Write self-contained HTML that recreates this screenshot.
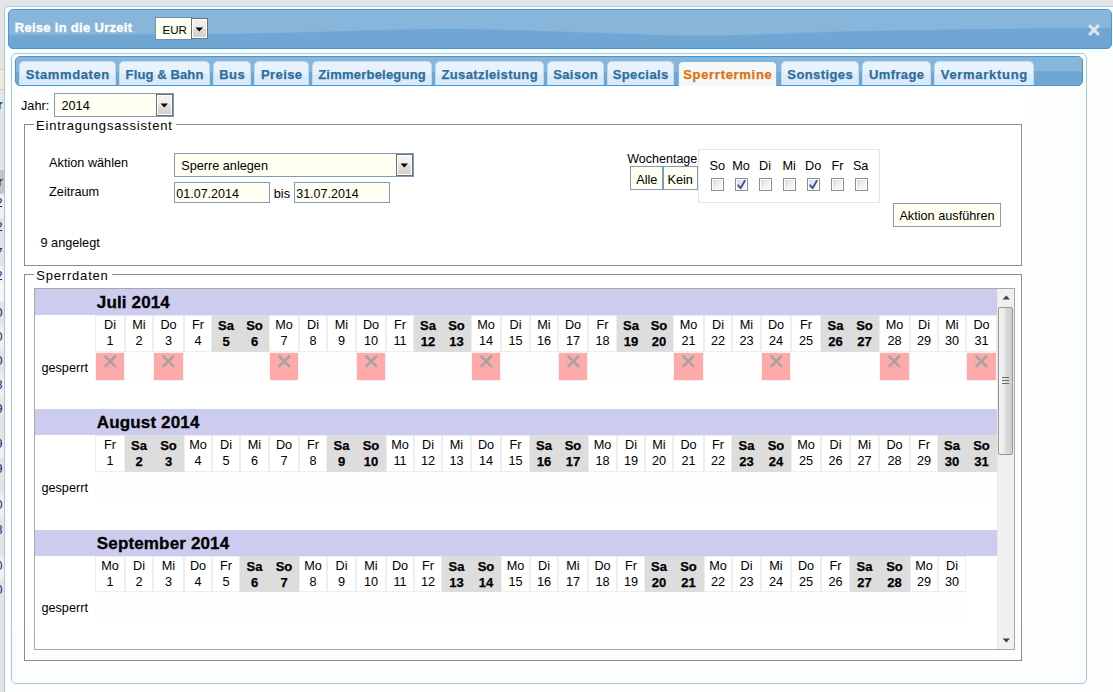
<!DOCTYPE html>
<html><head><meta charset="utf-8"><title>Sperrtermine</title>
<style>
html,body{margin:0;padding:0}
body{width:1113px;height:692px;overflow:hidden;position:relative;background:#e4e4e4;font-family:'Liberation Sans', sans-serif}
.t{position:absolute;white-space:nowrap;line-height:1;font-family:'Liberation Sans', sans-serif}
.c{position:absolute;text-align:center;line-height:16px;color:#000;font-family:'Liberation Sans', sans-serif}
</style></head><body>
<div style="position:absolute;left:0px;top:0px;width:5px;height:69px;box-sizing:border-box;background:#e4e4e4"></div><div style="position:absolute;left:0px;top:69px;width:5px;height:1px;box-sizing:border-box;background:#c8c8c8"></div><div style="position:absolute;left:0px;top:70px;width:5px;height:19px;box-sizing:border-box;background:#ece9d8"></div><div style="position:absolute;left:0px;top:89px;width:5px;height:1px;box-sizing:border-box;background:#c8c8c8"></div><div style="position:absolute;left:0px;top:90px;width:5px;height:80px;box-sizing:border-box;background:#e4e4e4"></div><div style="position:absolute;left:0px;top:170px;width:5px;height:24px;box-sizing:border-box;background:#c4c4c4"></div><div style="position:absolute;left:0px;top:194px;width:5px;height:24px;box-sizing:border-box;background:#f0f0f0"></div><div style="position:absolute;left:0px;top:218px;width:5px;height:24px;box-sizing:border-box;background:#e4e4e4"></div><div style="position:absolute;left:0px;top:242px;width:5px;height:24px;box-sizing:border-box;background:#e4e4e4"></div><div style="position:absolute;left:0px;top:266px;width:5px;height:17px;box-sizing:border-box;background:#f0f0f0"></div><div style="position:absolute;left:0px;top:283px;width:5px;height:19px;box-sizing:border-box;background:#f6f6f6"></div><div style="position:absolute;left:0px;top:302px;width:5px;height:25px;box-sizing:border-box;background:#e4e4e4"></div><div style="position:absolute;left:0px;top:327px;width:5px;height:24px;box-sizing:border-box;background:#f0f0f0"></div><div style="position:absolute;left:0px;top:351px;width:5px;height:24px;box-sizing:border-box;background:#e4e4e4"></div><div style="position:absolute;left:0px;top:375px;width:5px;height:24px;box-sizing:border-box;background:#f0f0f0"></div><div style="position:absolute;left:0px;top:399px;width:5px;height:41px;box-sizing:border-box;background:#e4e4e4"></div><div style="position:absolute;left:0px;top:440px;width:5px;height:18px;box-sizing:border-box;background:#f0f0f0"></div><div style="position:absolute;left:0px;top:458px;width:5px;height:37px;box-sizing:border-box;background:#e4e4e4"></div><div style="position:absolute;left:0px;top:495px;width:5px;height:24px;box-sizing:border-box;background:#f0f0f0"></div><div style="position:absolute;left:0px;top:519px;width:5px;height:37px;box-sizing:border-box;background:#e4e4e4"></div><div style="position:absolute;left:0px;top:556px;width:5px;height:24px;box-sizing:border-box;background:#f0f0f0"></div><div style="position:absolute;left:0px;top:580px;width:5px;height:112px;box-sizing:border-box;background:#e4e4e4"></div><div style="position:absolute;left:0;top:0;width:4px;height:692px;overflow:hidden"><div class="t" style="left:-2.20px;top:99.25px;font-size:12.7px;font-weight:bold;color:#2a2a2a;letter-spacing:0px;">r</div><div class="t" style="left:-2.20px;top:176.25px;font-size:12.7px;font-weight:bold;color:#3a2a10;letter-spacing:0px;">r</div><div class="t" style="left:-4.50px;top:197.25px;font-size:12.7px;font-weight:normal;color:#2a1a7a;letter-spacing:0px;">2</div><div class="t" style="left:-4.50px;top:221.25px;font-size:12.7px;font-weight:normal;color:#2a1a7a;letter-spacing:0px;">2</div><div class="t" style="left:-4.50px;top:247.25px;font-size:12.7px;font-weight:normal;color:#2a1a7a;letter-spacing:0px;">7</div><div class="t" style="left:-4.50px;top:270.25px;font-size:12.7px;font-weight:normal;color:#2a1a7a;letter-spacing:0px;">2</div><div class="t" style="left:-4.50px;top:307.25px;font-size:12.7px;font-weight:normal;color:#2a1a7a;letter-spacing:0px;">0</div><div class="t" style="left:-4.50px;top:331.25px;font-size:12.7px;font-weight:normal;color:#2a1a7a;letter-spacing:0px;">0</div><div class="t" style="left:-4.50px;top:355.25px;font-size:12.7px;font-weight:normal;color:#2a1a7a;letter-spacing:0px;">0</div><div class="t" style="left:-4.50px;top:379.25px;font-size:12.7px;font-weight:normal;color:#2a1a7a;letter-spacing:0px;">8</div><div class="t" style="left:-4.50px;top:403.25px;font-size:12.7px;font-weight:normal;color:#2a1a7a;letter-spacing:0px;">9</div><div class="t" style="left:-4.50px;top:438.25px;font-size:12.7px;font-weight:normal;color:#2a1a7a;letter-spacing:0px;">9</div><div class="t" style="left:-4.50px;top:463.25px;font-size:12.7px;font-weight:normal;color:#2a1a7a;letter-spacing:0px;">9</div><div class="t" style="left:-4.50px;top:499.25px;font-size:12.7px;font-weight:normal;color:#2a1a7a;letter-spacing:0px;">0</div><div class="t" style="left:-4.50px;top:524.25px;font-size:12.7px;font-weight:normal;color:#2a1a7a;letter-spacing:0px;">8</div><div class="t" style="left:-4.50px;top:560.25px;font-size:12.7px;font-weight:normal;color:#2a1a7a;letter-spacing:0px;">0</div><div class="t" style="left:-4.50px;top:584.25px;font-size:12.7px;font-weight:normal;color:#2a1a7a;letter-spacing:0px;">0</div></div><div style="position:absolute;left:4px;top:6px;width:1120px;height:720px;border:1px solid #a6c9e2;border-radius:5px;background:#fcfdfd;box-sizing:border-box"></div><div id="titlebar" style="position:absolute;left:8px;top:9px;width:1104px;height:40px;border:1px solid #4297d7;border-radius:5px;box-sizing:border-box;overflow:hidden;background:#6fa6d3"><svg width="1102" height="38" style="position:absolute;left:0;top:0"><path d="M0,0 H1102 V18.40 L1102.0,18.40 L1083.3,18.46 L1064.6,18.56 L1046.0,18.70 L1027.3,18.87 L1008.6,19.07 L989.9,19.29 L971.3,19.54 L952.6,19.80 L933.9,20.09 L915.2,20.39 L896.5,20.70 L877.9,21.03 L859.2,21.35 L840.5,21.72 L821.8,22.25 L803.2,22.91 L784.5,23.63 L765.8,24.36 L747.1,25.03 L728.4,25.58 L709.8,25.96 L691.1,26.10 L672.4,25.92 L653.7,25.46 L635.1,24.83 L616.4,24.14 L597.7,23.50 L579.0,22.95 L560.3,22.34 L541.7,21.68 L523.0,21.02 L504.3,20.41 L485.6,19.90 L466.9,19.52 L448.3,19.32 L429.6,19.34 L410.9,19.54 L392.2,19.88 L373.6,20.34 L354.9,20.87 L336.2,21.45 L317.5,22.04 L298.8,22.60 L280.2,23.10 L261.5,23.50 L242.8,23.78 L224.1,23.97 L205.5,24.14 L186.8,24.32 L168.1,24.48 L149.4,24.63 L130.7,24.78 L112.1,24.91 L93.4,25.02 L74.7,25.12 L56.0,25.19 L37.4,25.25 L18.7,25.29 L0.0,25.30 Z" fill="#7caed7"/><path d="M0,0 H1102 V17.60 L1102.0,17.60 L1083.3,17.66 L1064.6,17.76 L1046.0,17.90 L1027.3,18.07 L1008.6,18.27 L989.9,18.49 L971.3,18.74 L952.6,19.00 L933.9,19.29 L915.2,19.59 L896.5,19.90 L877.9,20.23 L859.2,20.55 L840.5,20.92 L821.8,21.45 L803.2,22.11 L784.5,22.83 L765.8,23.56 L747.1,24.23 L728.4,24.78 L709.8,25.16 L691.1,25.30 L672.4,25.12 L653.7,24.66 L635.1,24.03 L616.4,23.34 L597.7,22.70 L579.0,22.15 L560.3,21.54 L541.7,20.88 L523.0,20.22 L504.3,19.61 L485.6,19.10 L466.9,18.72 L448.3,18.52 L429.6,18.54 L410.9,18.74 L392.2,19.08 L373.6,19.54 L354.9,20.07 L336.2,20.65 L317.5,21.24 L298.8,21.80 L280.2,22.30 L261.5,22.70 L242.8,22.98 L224.1,23.17 L205.5,23.34 L186.8,23.52 L168.1,23.68 L149.4,23.83 L130.7,23.98 L112.1,24.11 L93.4,24.22 L74.7,24.32 L56.0,24.39 L37.4,24.45 L18.7,24.49 L0.0,24.50 Z" fill="#88b5da"/></svg></div><div class="t" style="left:14.70px;top:21.00px;font-size:13px;font-weight:bold;color:#ffffff;letter-spacing:0.3px;-webkit-text-stroke:0.35px #fff;">Reise in die Urzeit</div><div style="position:absolute;left:155px;top:17px;width:37px;height:23px;box-sizing:border-box;border:1px solid #6f8fb3;border-right:0;background:#fffff2"></div><div class="t" style="left:162.50px;top:24.18px;font-size:11.6px;font-weight:normal;color:#000;letter-spacing:0px;">EUR</div><div style="position:absolute;left:191px;top:18px;width:17px;height:21px;box-sizing:border-box;border:1px solid #707070;background:linear-gradient(#f2f2f2 0%,#ebebeb 50%,#dcdcdc 51%,#d0d0d0 100%);box-shadow:inset 0 0 0 1px #fff"></div><svg style="position:absolute;left:195px;top:26.5px" width="9" height="6"><path d="M0.5,0.5 H8 L4.25,4.5 Z" fill="#000"/></svg><svg style="position:absolute;left:1088px;top:24px" width="12" height="12"><path d="M2.2,2.2 L9.8,9.8 M9.8,2.2 L2.2,9.8" stroke="#dce6f0" stroke-width="3" stroke-linecap="square"/></svg><div style="position:absolute;left:11px;top:53px;width:1076px;height:631px;border:1px solid #a6c9e2;border-radius:5px;background:#fcfdfd;box-sizing:border-box"></div><div style="position:absolute;left:15px;top:56px;width:1068px;height:30px;border:1px solid #4297d7;border-radius:5px;box-sizing:border-box;overflow:hidden;background:#6fa6d3"><svg width="1066" height="28" style="position:absolute;left:0;top:0"><path d="M0,0 H1066 V14.6 C900,14.8 700,15.5 500,15.3 C300,15 150,15 0,15 Z" fill="#7caed7"/><path d="M0,0 H1066 V14 C900,14.2 700,15 500,14.8 C300,14.5 150,14.5 0,14.5 Z" fill="#88b5da"/></svg></div><div style="position:absolute;left:15px;top:86px;width:1016px;height:543px;box-sizing:border-box;background:#ffffff"></div><div style="position:absolute;left:19px;top:61px;width:97px;height:24px;box-sizing:border-box;border:1px solid #c5dbec;border-bottom:0;background:linear-gradient(#eaf3fc 0%,#e6f1fc 50%,#dcebfa 52%,#dae9f9 100%);border-radius:5px 5px 0 0;font-family:'Liberation Sans', sans-serif;font-size:13px;font-weight:bold;color:#2e6e9e;text-align:center;line-height:25.5px;letter-spacing:0.6px;text-indent:0.6px;-webkit-text-stroke:0.25px #2e6e9e">Stammdaten</div><div style="position:absolute;left:119px;top:61px;width:91px;height:24px;box-sizing:border-box;border:1px solid #c5dbec;border-bottom:0;background:linear-gradient(#eaf3fc 0%,#e6f1fc 50%,#dcebfa 52%,#dae9f9 100%);border-radius:5px 5px 0 0;font-family:'Liberation Sans', sans-serif;font-size:13px;font-weight:bold;color:#2e6e9e;text-align:center;line-height:25.5px;letter-spacing:0.12px;text-indent:0.12px;-webkit-text-stroke:0.25px #2e6e9e">Flug &amp; Bahn</div><div style="position:absolute;left:213px;top:61px;width:38px;height:24px;box-sizing:border-box;border:1px solid #c5dbec;border-bottom:0;background:linear-gradient(#eaf3fc 0%,#e6f1fc 50%,#dcebfa 52%,#dae9f9 100%);border-radius:5px 5px 0 0;font-family:'Liberation Sans', sans-serif;font-size:13px;font-weight:bold;color:#2e6e9e;text-align:center;line-height:25.5px;letter-spacing:0.4px;text-indent:0.4px;-webkit-text-stroke:0.25px #2e6e9e">Bus</div><div style="position:absolute;left:254px;top:61px;width:55px;height:24px;box-sizing:border-box;border:1px solid #c5dbec;border-bottom:0;background:linear-gradient(#eaf3fc 0%,#e6f1fc 50%,#dcebfa 52%,#dae9f9 100%);border-radius:5px 5px 0 0;font-family:'Liberation Sans', sans-serif;font-size:13px;font-weight:bold;color:#2e6e9e;text-align:center;line-height:25.5px;letter-spacing:0.4px;text-indent:0.4px;-webkit-text-stroke:0.25px #2e6e9e">Preise</div><div style="position:absolute;left:312px;top:61px;width:120px;height:24px;box-sizing:border-box;border:1px solid #c5dbec;border-bottom:0;background:linear-gradient(#eaf3fc 0%,#e6f1fc 50%,#dcebfa 52%,#dae9f9 100%);border-radius:5px 5px 0 0;font-family:'Liberation Sans', sans-serif;font-size:13px;font-weight:bold;color:#2e6e9e;text-align:center;line-height:25.5px;letter-spacing:0.22px;text-indent:0.22px;-webkit-text-stroke:0.25px #2e6e9e">Zimmerbelegung</div><div style="position:absolute;left:435px;top:61px;width:109px;height:24px;box-sizing:border-box;border:1px solid #c5dbec;border-bottom:0;background:linear-gradient(#eaf3fc 0%,#e6f1fc 50%,#dcebfa 52%,#dae9f9 100%);border-radius:5px 5px 0 0;font-family:'Liberation Sans', sans-serif;font-size:13px;font-weight:bold;color:#2e6e9e;text-align:center;line-height:25.5px;letter-spacing:0.4px;text-indent:0.4px;-webkit-text-stroke:0.25px #2e6e9e">Zusatzleistung</div><div style="position:absolute;left:547px;top:61px;width:57px;height:24px;box-sizing:border-box;border:1px solid #c5dbec;border-bottom:0;background:linear-gradient(#eaf3fc 0%,#e6f1fc 50%,#dcebfa 52%,#dae9f9 100%);border-radius:5px 5px 0 0;font-family:'Liberation Sans', sans-serif;font-size:13px;font-weight:bold;color:#2e6e9e;text-align:center;line-height:25.5px;letter-spacing:0.4px;text-indent:0.4px;-webkit-text-stroke:0.25px #2e6e9e">Saison</div><div style="position:absolute;left:607px;top:61px;width:67px;height:24px;box-sizing:border-box;border:1px solid #c5dbec;border-bottom:0;background:linear-gradient(#eaf3fc 0%,#e6f1fc 50%,#dcebfa 52%,#dae9f9 100%);border-radius:5px 5px 0 0;font-family:'Liberation Sans', sans-serif;font-size:13px;font-weight:bold;color:#2e6e9e;text-align:center;line-height:25.5px;letter-spacing:0.4px;text-indent:0.4px;-webkit-text-stroke:0.25px #2e6e9e">Specials</div><div style="position:absolute;left:678px;top:61px;width:99px;height:25px;box-sizing:border-box;border:1px solid #79b7e7;border-bottom:0;background:#f5f8f9;border-radius:5px 5px 0 0;font-family:'Liberation Sans', sans-serif;font-size:13px;font-weight:bold;color:#e17009;text-align:center;line-height:25.5px;letter-spacing:0.7px;text-indent:0.7px;-webkit-text-stroke:0.25px #e17009">Sperrtermine</div><div style="position:absolute;left:781px;top:61px;width:78px;height:24px;box-sizing:border-box;border:1px solid #c5dbec;border-bottom:0;background:linear-gradient(#eaf3fc 0%,#e6f1fc 50%,#dcebfa 52%,#dae9f9 100%);border-radius:5px 5px 0 0;font-family:'Liberation Sans', sans-serif;font-size:13px;font-weight:bold;color:#2e6e9e;text-align:center;line-height:25.5px;letter-spacing:0.4px;text-indent:0.4px;-webkit-text-stroke:0.25px #2e6e9e">Sonstiges</div><div style="position:absolute;left:862px;top:61px;width:69px;height:24px;box-sizing:border-box;border:1px solid #c5dbec;border-bottom:0;background:linear-gradient(#eaf3fc 0%,#e6f1fc 50%,#dcebfa 52%,#dae9f9 100%);border-radius:5px 5px 0 0;font-family:'Liberation Sans', sans-serif;font-size:13px;font-weight:bold;color:#2e6e9e;text-align:center;line-height:25.5px;letter-spacing:0.4px;text-indent:0.4px;-webkit-text-stroke:0.25px #2e6e9e">Umfrage</div><div style="position:absolute;left:934px;top:61px;width:100px;height:24px;box-sizing:border-box;border:1px solid #c5dbec;border-bottom:0;background:linear-gradient(#eaf3fc 0%,#e6f1fc 50%,#dcebfa 52%,#dae9f9 100%);border-radius:5px 5px 0 0;font-family:'Liberation Sans', sans-serif;font-size:13px;font-weight:bold;color:#2e6e9e;text-align:center;line-height:25.5px;letter-spacing:0.7px;text-indent:0.7px;-webkit-text-stroke:0.25px #2e6e9e">Vermarktung</div><div class="t" style="left:21.00px;top:100.25px;font-size:12.7px;font-weight:normal;color:#000;letter-spacing:0px;">Jahr:</div><div style="position:absolute;left:54px;top:93px;width:120px;height:24px;box-sizing:border-box;border:1px solid #7f9db9;background:#fffff2"></div><div class="t" style="left:61.50px;top:99.85px;font-size:12.7px;font-weight:normal;color:#000;letter-spacing:0px;">2014</div><div style="position:absolute;left:156px;top:94px;width:17px;height:22px;box-sizing:border-box;border:1px solid #707070;background:linear-gradient(#f4f4f4 0%,#ececec 48%,#dedede 52%,#d2d2d2 100%);box-shadow:inset 0 0 0 1px #fff"></div><svg style="position:absolute;left:160.0px;top:102.5px" width="9" height="6"><path d="M0.5,0.5 H8 L4.25,4.5 Z" fill="#000"/></svg><div style="position:absolute;left:24px;top:124px;width:998px;height:142px;box-sizing:border-box;border:1px solid #8c8c8c"></div><div style="position:absolute;left:34px;top:124px;width:142px;height:1px;box-sizing:border-box;background:#fcfdfd"></div><div class="t" style="left:36.00px;top:118.60px;font-size:13px;font-weight:normal;color:#000;letter-spacing:0.8px;">Eintragungsassistent</div><div class="t" style="left:49.10px;top:157.25px;font-size:12.7px;font-weight:normal;color:#000;letter-spacing:0px;">Aktion w&auml;hlen</div><div class="t" style="left:49.10px;top:186.25px;font-size:12.7px;font-weight:normal;color:#000;letter-spacing:0px;">Zeitraum</div><div class="t" style="left:40.50px;top:236.75px;font-size:12.7px;font-weight:normal;color:#000;letter-spacing:0px;">9 angelegt</div><div style="position:absolute;left:174px;top:153px;width:240px;height:24px;box-sizing:border-box;border:1px solid #7f9db9;background:#fffff2"></div><div class="t" style="left:181.20px;top:159.95px;font-size:12.7px;font-weight:normal;color:#000;letter-spacing:0px;">Sperre anlegen</div><div style="position:absolute;left:396px;top:154px;width:17px;height:22px;box-sizing:border-box;border:1px solid #707070;background:linear-gradient(#f4f4f4 0%,#ececec 48%,#dedede 52%,#d2d2d2 100%);box-shadow:inset 0 0 0 1px #fff"></div><svg style="position:absolute;left:400.0px;top:162.5px" width="9" height="6"><path d="M0.5,0.5 H8 L4.25,4.5 Z" fill="#000"/></svg><div style="position:absolute;left:174px;top:182px;width:96px;height:21px;box-sizing:border-box;border:1px solid #7f9db9;background:#fffff2"></div><div class="t" style="left:176.30px;top:188.42px;font-size:12.5px;font-weight:normal;color:#000;letter-spacing:0px;">01.07.2014</div><div class="t" style="left:273.80px;top:188.25px;font-size:12.7px;font-weight:normal;color:#000;letter-spacing:0px;">bis</div><div style="position:absolute;left:294px;top:182px;width:96px;height:21px;box-sizing:border-box;border:1px solid #7f9db9;background:#fffff2"></div><div class="t" style="left:296.20px;top:188.42px;font-size:12.5px;font-weight:normal;color:#000;letter-spacing:0px;">31.07.2014</div><div class="t" style="left:627.30px;top:152.92px;font-size:12.5px;font-weight:normal;color:#000;letter-spacing:0px;">Wochentage</div><div style="position:absolute;left:630px;top:166px;width:33px;height:24px;box-sizing:border-box;border:1px solid #7f9db9;background:#fffff2"></div><div style="position:absolute;left:663px;top:166px;width:35px;height:24px;box-sizing:border-box;border:1px solid #7f9db9;background:#fffff2"></div><div class="t" style="left:636.20px;top:173.75px;font-size:12.7px;font-weight:normal;color:#000;letter-spacing:0px;">Alle</div><div class="t" style="left:667.50px;top:173.75px;font-size:12.7px;font-weight:normal;color:#000;letter-spacing:0px;">Kein</div><div style="position:absolute;left:698px;top:149px;width:182px;height:54px;box-sizing:border-box;border:1px solid #e6e6e6;background:#ffffff"></div><div class="t" style="left:709.50px;top:159.95px;font-size:12.7px;font-weight:normal;color:#000;letter-spacing:0px;">So</div><div style="position:absolute;left:711px;top:178px;width:13px;height:13px;box-sizing:border-box;border:1px solid #8e8f8f;background:#fff"></div><div style="position:absolute;left:713px;top:180px;width:9px;height:9px;box-sizing:border-box;background:linear-gradient(135deg,#d6d9e0 0%,#eceef2 50%,#fbfbfb 100%)"></div><div class="t" style="left:732.20px;top:159.95px;font-size:12.7px;font-weight:normal;color:#000;letter-spacing:0px;">Mo</div><div style="position:absolute;left:735px;top:178px;width:13px;height:13px;box-sizing:border-box;border:1px solid #8e8f8f;background:#fff"></div><div style="position:absolute;left:737px;top:180px;width:9px;height:9px;box-sizing:border-box;background:linear-gradient(135deg,#d6d9e0 0%,#eceef2 50%,#fbfbfb 100%)"></div><svg style="position:absolute;left:735px;top:178px" width="13" height="13"><path d="M3.2,7.3 L5.6,10.2 L9.8,2.8" stroke="#3e55a0" stroke-width="1.9" fill="none" stroke-linecap="round" stroke-linejoin="round"/></svg><div class="t" style="left:759.00px;top:159.95px;font-size:12.7px;font-weight:normal;color:#000;letter-spacing:0px;">Di</div><div style="position:absolute;left:759px;top:178px;width:13px;height:13px;box-sizing:border-box;border:1px solid #8e8f8f;background:#fff"></div><div style="position:absolute;left:761px;top:180px;width:9px;height:9px;box-sizing:border-box;background:linear-gradient(135deg,#d6d9e0 0%,#eceef2 50%,#fbfbfb 100%)"></div><div class="t" style="left:782.40px;top:159.95px;font-size:12.7px;font-weight:normal;color:#000;letter-spacing:0px;">Mi</div><div style="position:absolute;left:783px;top:178px;width:13px;height:13px;box-sizing:border-box;border:1px solid #8e8f8f;background:#fff"></div><div style="position:absolute;left:785px;top:180px;width:9px;height:9px;box-sizing:border-box;background:linear-gradient(135deg,#d6d9e0 0%,#eceef2 50%,#fbfbfb 100%)"></div><div class="t" style="left:805.10px;top:159.95px;font-size:12.7px;font-weight:normal;color:#000;letter-spacing:0px;">Do</div><div style="position:absolute;left:807px;top:178px;width:13px;height:13px;box-sizing:border-box;border:1px solid #8e8f8f;background:#fff"></div><div style="position:absolute;left:809px;top:180px;width:9px;height:9px;box-sizing:border-box;background:linear-gradient(135deg,#d6d9e0 0%,#eceef2 50%,#fbfbfb 100%)"></div><svg style="position:absolute;left:807px;top:178px" width="13" height="13"><path d="M3.2,7.3 L5.6,10.2 L9.8,2.8" stroke="#3e55a0" stroke-width="1.9" fill="none" stroke-linecap="round" stroke-linejoin="round"/></svg><div class="t" style="left:831.60px;top:159.95px;font-size:12.7px;font-weight:normal;color:#000;letter-spacing:0px;">Fr</div><div style="position:absolute;left:831px;top:178px;width:13px;height:13px;box-sizing:border-box;border:1px solid #8e8f8f;background:#fff"></div><div style="position:absolute;left:833px;top:180px;width:9px;height:9px;box-sizing:border-box;background:linear-gradient(135deg,#d6d9e0 0%,#eceef2 50%,#fbfbfb 100%)"></div><div class="t" style="left:852.90px;top:159.95px;font-size:12.7px;font-weight:normal;color:#000;letter-spacing:0px;">Sa</div><div style="position:absolute;left:855px;top:178px;width:13px;height:13px;box-sizing:border-box;border:1px solid #8e8f8f;background:#fff"></div><div style="position:absolute;left:857px;top:180px;width:9px;height:9px;box-sizing:border-box;background:linear-gradient(135deg,#d6d9e0 0%,#eceef2 50%,#fbfbfb 100%)"></div><div style="position:absolute;left:893px;top:203px;width:108px;height:24px;box-sizing:border-box;border:1px solid #7f9db9;background:#fffff2"></div><div class="t" style="left:899.40px;top:210.45px;font-size:12.7px;font-weight:normal;color:#000;letter-spacing:0px;">Aktion ausf&uuml;hren</div><div style="position:absolute;left:24px;top:274px;width:998px;height:387px;box-sizing:border-box;border:1px solid #8c8c8c"></div><div style="position:absolute;left:34px;top:274px;width:78px;height:1px;box-sizing:border-box;background:#fcfdfd"></div><div class="t" style="left:36.30px;top:268.60px;font-size:13px;font-weight:normal;color:#000;letter-spacing:0.8px;">Sperrdaten</div><div style="position:absolute;left:34px;top:288px;width:981px;height:362px;box-sizing:border-box;border:1px solid #a8a8a8;background:#ffffff"></div><div style="position:absolute;left:35px;top:289px;width:962px;height:26px;box-sizing:border-box;background:#ccccee"></div><div class="t" style="left:96.80px;top:294.21px;font-size:17px;font-weight:bold;color:#000;letter-spacing:0.15px;-webkit-text-stroke:0.3px #000;">Juli 2014</div><div style="position:absolute;left:95px;top:315px;width:30px;height:37px;box-sizing:border-box;border:1px solid #eeeeee;background:#ffffff"></div><div class="c" style="left:95px;top:317.2px;width:30px;font-weight:normal;font-size:12.7px;">Di<br>1</div><div style="position:absolute;left:95px;top:352px;width:30px;height:29px;box-sizing:border-box;border:1px solid #f4f4f4;background:#ffaaaa"></div><svg style="position:absolute;left:103.8px;top:354.5px" width="13" height="13"><path d="M1.5,1.5 L11.2,11.2 M11.2,1.5 L1.5,11.2" stroke="#a3a3a3" stroke-width="2.5" stroke-linecap="round"/></svg><div style="position:absolute;left:125px;top:315px;width:28px;height:37px;box-sizing:border-box;border:1px solid #eeeeee;background:#ffffff"></div><div class="c" style="left:125px;top:317.2px;width:28px;font-weight:normal;font-size:12.7px;">Mi<br>2</div><div style="position:absolute;left:125px;top:352px;width:28px;height:29px;box-sizing:border-box;background:#fefefe"></div><div style="position:absolute;left:153px;top:315px;width:31px;height:37px;box-sizing:border-box;border:1px solid #eeeeee;background:#ffffff"></div><div class="c" style="left:153px;top:317.2px;width:31px;font-weight:normal;font-size:12.7px;">Do<br>3</div><div style="position:absolute;left:153px;top:352px;width:31px;height:29px;box-sizing:border-box;border:1px solid #f4f4f4;background:#ffaaaa"></div><svg style="position:absolute;left:162.3px;top:354.5px" width="13" height="13"><path d="M1.5,1.5 L11.2,11.2 M11.2,1.5 L1.5,11.2" stroke="#a3a3a3" stroke-width="2.5" stroke-linecap="round"/></svg><div style="position:absolute;left:184px;top:315px;width:28px;height:37px;box-sizing:border-box;border:1px solid #eeeeee;background:#ffffff"></div><div class="c" style="left:184px;top:317.2px;width:28px;font-weight:normal;font-size:12.7px;">Fr<br>4</div><div style="position:absolute;left:184px;top:352px;width:28px;height:29px;box-sizing:border-box;background:#fefefe"></div><div style="position:absolute;left:212px;top:315px;width:28px;height:37px;box-sizing:border-box;background:#dddddd"></div><div class="c" style="left:212px;top:318.0px;width:28px;font-weight:bold;font-size:13px;-webkit-text-stroke:0.25px #000;">Sa<br>5</div><div style="position:absolute;left:212px;top:352px;width:28px;height:29px;box-sizing:border-box;background:#fefefe"></div><div style="position:absolute;left:240px;top:315px;width:29px;height:37px;box-sizing:border-box;background:#dddddd"></div><div class="c" style="left:240px;top:318.0px;width:29px;font-weight:bold;font-size:13px;-webkit-text-stroke:0.25px #000;">So<br>6</div><div style="position:absolute;left:240px;top:352px;width:29px;height:29px;box-sizing:border-box;background:#fefefe"></div><div style="position:absolute;left:269px;top:315px;width:30px;height:37px;box-sizing:border-box;border:1px solid #eeeeee;background:#ffffff"></div><div class="c" style="left:269px;top:317.2px;width:30px;font-weight:normal;font-size:12.7px;">Mo<br>7</div><div style="position:absolute;left:269px;top:352px;width:30px;height:29px;box-sizing:border-box;border:1px solid #f4f4f4;background:#ffaaaa"></div><svg style="position:absolute;left:277.8px;top:354.5px" width="13" height="13"><path d="M1.5,1.5 L11.2,11.2 M11.2,1.5 L1.5,11.2" stroke="#a3a3a3" stroke-width="2.5" stroke-linecap="round"/></svg><div style="position:absolute;left:299px;top:315px;width:28px;height:37px;box-sizing:border-box;border:1px solid #eeeeee;background:#ffffff"></div><div class="c" style="left:299px;top:317.2px;width:28px;font-weight:normal;font-size:12.7px;">Di<br>8</div><div style="position:absolute;left:299px;top:352px;width:28px;height:29px;box-sizing:border-box;background:#fefefe"></div><div style="position:absolute;left:327px;top:315px;width:29px;height:37px;box-sizing:border-box;border:1px solid #eeeeee;background:#ffffff"></div><div class="c" style="left:327px;top:317.2px;width:29px;font-weight:normal;font-size:12.7px;">Mi<br>9</div><div style="position:absolute;left:327px;top:352px;width:29px;height:29px;box-sizing:border-box;background:#fefefe"></div><div style="position:absolute;left:356px;top:315px;width:30px;height:37px;box-sizing:border-box;border:1px solid #eeeeee;background:#ffffff"></div><div class="c" style="left:356px;top:317.2px;width:30px;font-weight:normal;font-size:12.7px;">Do<br>10</div><div style="position:absolute;left:356px;top:352px;width:30px;height:29px;box-sizing:border-box;border:1px solid #f4f4f4;background:#ffaaaa"></div><svg style="position:absolute;left:364.8px;top:354.5px" width="13" height="13"><path d="M1.5,1.5 L11.2,11.2 M11.2,1.5 L1.5,11.2" stroke="#a3a3a3" stroke-width="2.5" stroke-linecap="round"/></svg><div style="position:absolute;left:386px;top:315px;width:28px;height:37px;box-sizing:border-box;border:1px solid #eeeeee;background:#ffffff"></div><div class="c" style="left:386px;top:317.2px;width:28px;font-weight:normal;font-size:12.7px;">Fr<br>11</div><div style="position:absolute;left:386px;top:352px;width:28px;height:29px;box-sizing:border-box;background:#fefefe"></div><div style="position:absolute;left:414px;top:315px;width:28px;height:37px;box-sizing:border-box;background:#dddddd"></div><div class="c" style="left:414px;top:318.0px;width:28px;font-weight:bold;font-size:13px;-webkit-text-stroke:0.25px #000;">Sa<br>12</div><div style="position:absolute;left:414px;top:352px;width:28px;height:29px;box-sizing:border-box;background:#fefefe"></div><div style="position:absolute;left:442px;top:315px;width:29px;height:37px;box-sizing:border-box;background:#dddddd"></div><div class="c" style="left:442px;top:318.0px;width:29px;font-weight:bold;font-size:13px;-webkit-text-stroke:0.25px #000;">So<br>13</div><div style="position:absolute;left:442px;top:352px;width:29px;height:29px;box-sizing:border-box;background:#fefefe"></div><div style="position:absolute;left:471px;top:315px;width:30px;height:37px;box-sizing:border-box;border:1px solid #eeeeee;background:#ffffff"></div><div class="c" style="left:471px;top:317.2px;width:30px;font-weight:normal;font-size:12.7px;">Mo<br>14</div><div style="position:absolute;left:471px;top:352px;width:30px;height:29px;box-sizing:border-box;border:1px solid #f4f4f4;background:#ffaaaa"></div><svg style="position:absolute;left:479.8px;top:354.5px" width="13" height="13"><path d="M1.5,1.5 L11.2,11.2 M11.2,1.5 L1.5,11.2" stroke="#a3a3a3" stroke-width="2.5" stroke-linecap="round"/></svg><div style="position:absolute;left:501px;top:315px;width:29px;height:37px;box-sizing:border-box;border:1px solid #eeeeee;background:#ffffff"></div><div class="c" style="left:501px;top:317.2px;width:29px;font-weight:normal;font-size:12.7px;">Di<br>15</div><div style="position:absolute;left:501px;top:352px;width:29px;height:29px;box-sizing:border-box;background:#fefefe"></div><div style="position:absolute;left:530px;top:315px;width:28px;height:37px;box-sizing:border-box;border:1px solid #eeeeee;background:#ffffff"></div><div class="c" style="left:530px;top:317.2px;width:28px;font-weight:normal;font-size:12.7px;">Mi<br>16</div><div style="position:absolute;left:530px;top:352px;width:28px;height:29px;box-sizing:border-box;background:#fefefe"></div><div style="position:absolute;left:558px;top:315px;width:30px;height:37px;box-sizing:border-box;border:1px solid #eeeeee;background:#ffffff"></div><div class="c" style="left:558px;top:317.2px;width:30px;font-weight:normal;font-size:12.7px;">Do<br>17</div><div style="position:absolute;left:558px;top:352px;width:30px;height:29px;box-sizing:border-box;border:1px solid #f4f4f4;background:#ffaaaa"></div><svg style="position:absolute;left:566.8px;top:354.5px" width="13" height="13"><path d="M1.5,1.5 L11.2,11.2 M11.2,1.5 L1.5,11.2" stroke="#a3a3a3" stroke-width="2.5" stroke-linecap="round"/></svg><div style="position:absolute;left:588px;top:315px;width:29px;height:37px;box-sizing:border-box;border:1px solid #eeeeee;background:#ffffff"></div><div class="c" style="left:588px;top:317.2px;width:29px;font-weight:normal;font-size:12.7px;">Fr<br>18</div><div style="position:absolute;left:588px;top:352px;width:29px;height:29px;box-sizing:border-box;background:#fefefe"></div><div style="position:absolute;left:617px;top:315px;width:28px;height:37px;box-sizing:border-box;background:#dddddd"></div><div class="c" style="left:617px;top:318.0px;width:28px;font-weight:bold;font-size:13px;-webkit-text-stroke:0.25px #000;">Sa<br>19</div><div style="position:absolute;left:617px;top:352px;width:28px;height:29px;box-sizing:border-box;background:#fefefe"></div><div style="position:absolute;left:645px;top:315px;width:28px;height:37px;box-sizing:border-box;background:#dddddd"></div><div class="c" style="left:645px;top:318.0px;width:28px;font-weight:bold;font-size:13px;-webkit-text-stroke:0.25px #000;">So<br>20</div><div style="position:absolute;left:645px;top:352px;width:28px;height:29px;box-sizing:border-box;background:#fefefe"></div><div style="position:absolute;left:673px;top:315px;width:31px;height:37px;box-sizing:border-box;border:1px solid #eeeeee;background:#ffffff"></div><div class="c" style="left:673px;top:317.2px;width:31px;font-weight:normal;font-size:12.7px;">Mo<br>21</div><div style="position:absolute;left:673px;top:352px;width:31px;height:29px;box-sizing:border-box;border:1px solid #f4f4f4;background:#ffaaaa"></div><svg style="position:absolute;left:682.3px;top:354.5px" width="13" height="13"><path d="M1.5,1.5 L11.2,11.2 M11.2,1.5 L1.5,11.2" stroke="#a3a3a3" stroke-width="2.5" stroke-linecap="round"/></svg><div style="position:absolute;left:704px;top:315px;width:28px;height:37px;box-sizing:border-box;border:1px solid #eeeeee;background:#ffffff"></div><div class="c" style="left:704px;top:317.2px;width:28px;font-weight:normal;font-size:12.7px;">Di<br>22</div><div style="position:absolute;left:704px;top:352px;width:28px;height:29px;box-sizing:border-box;background:#fefefe"></div><div style="position:absolute;left:732px;top:315px;width:29px;height:37px;box-sizing:border-box;border:1px solid #eeeeee;background:#ffffff"></div><div class="c" style="left:732px;top:317.2px;width:29px;font-weight:normal;font-size:12.7px;">Mi<br>23</div><div style="position:absolute;left:732px;top:352px;width:29px;height:29px;box-sizing:border-box;background:#fefefe"></div><div style="position:absolute;left:761px;top:315px;width:30px;height:37px;box-sizing:border-box;border:1px solid #eeeeee;background:#ffffff"></div><div class="c" style="left:761px;top:317.2px;width:30px;font-weight:normal;font-size:12.7px;">Do<br>24</div><div style="position:absolute;left:761px;top:352px;width:30px;height:29px;box-sizing:border-box;border:1px solid #f4f4f4;background:#ffaaaa"></div><svg style="position:absolute;left:769.8px;top:354.5px" width="13" height="13"><path d="M1.5,1.5 L11.2,11.2 M11.2,1.5 L1.5,11.2" stroke="#a3a3a3" stroke-width="2.5" stroke-linecap="round"/></svg><div style="position:absolute;left:791px;top:315px;width:30px;height:37px;box-sizing:border-box;border:1px solid #eeeeee;background:#ffffff"></div><div class="c" style="left:791px;top:317.2px;width:30px;font-weight:normal;font-size:12.7px;">Fr<br>25</div><div style="position:absolute;left:791px;top:352px;width:30px;height:29px;box-sizing:border-box;background:#fefefe"></div><div style="position:absolute;left:821px;top:315px;width:29px;height:37px;box-sizing:border-box;background:#dddddd"></div><div class="c" style="left:821px;top:318.0px;width:29px;font-weight:bold;font-size:13px;-webkit-text-stroke:0.25px #000;">Sa<br>26</div><div style="position:absolute;left:821px;top:352px;width:29px;height:29px;box-sizing:border-box;background:#fefefe"></div><div style="position:absolute;left:850px;top:315px;width:29px;height:37px;box-sizing:border-box;background:#dddddd"></div><div class="c" style="left:850px;top:318.0px;width:29px;font-weight:bold;font-size:13px;-webkit-text-stroke:0.25px #000;">So<br>27</div><div style="position:absolute;left:850px;top:352px;width:29px;height:29px;box-sizing:border-box;background:#fefefe"></div><div style="position:absolute;left:879px;top:315px;width:31px;height:37px;box-sizing:border-box;border:1px solid #eeeeee;background:#ffffff"></div><div class="c" style="left:879px;top:317.2px;width:31px;font-weight:normal;font-size:12.7px;">Mo<br>28</div><div style="position:absolute;left:879px;top:352px;width:31px;height:29px;box-sizing:border-box;border:1px solid #f4f4f4;background:#ffaaaa"></div><svg style="position:absolute;left:888.3px;top:354.5px" width="13" height="13"><path d="M1.5,1.5 L11.2,11.2 M11.2,1.5 L1.5,11.2" stroke="#a3a3a3" stroke-width="2.5" stroke-linecap="round"/></svg><div style="position:absolute;left:910px;top:315px;width:28px;height:37px;box-sizing:border-box;border:1px solid #eeeeee;background:#ffffff"></div><div class="c" style="left:910px;top:317.2px;width:28px;font-weight:normal;font-size:12.7px;">Di<br>29</div><div style="position:absolute;left:910px;top:352px;width:28px;height:29px;box-sizing:border-box;background:#fefefe"></div><div style="position:absolute;left:938px;top:315px;width:28px;height:37px;box-sizing:border-box;border:1px solid #eeeeee;background:#ffffff"></div><div class="c" style="left:938px;top:317.2px;width:28px;font-weight:normal;font-size:12.7px;">Mi<br>30</div><div style="position:absolute;left:938px;top:352px;width:28px;height:29px;box-sizing:border-box;background:#fefefe"></div><div style="position:absolute;left:966px;top:315px;width:31px;height:37px;box-sizing:border-box;border:1px solid #eeeeee;background:#ffffff"></div><div class="c" style="left:966px;top:317.2px;width:31px;font-weight:normal;font-size:12.7px;">Do<br>31</div><div style="position:absolute;left:966px;top:352px;width:31px;height:29px;box-sizing:border-box;border:1px solid #f4f4f4;background:#ffaaaa"></div><svg style="position:absolute;left:975.3px;top:354.5px" width="13" height="13"><path d="M1.5,1.5 L11.2,11.2 M11.2,1.5 L1.5,11.2" stroke="#a3a3a3" stroke-width="2.5" stroke-linecap="round"/></svg><div class="t" style="left:41.40px;top:361.65px;font-size:12.7px;font-weight:normal;color:#000;letter-spacing:0px;">gesperrt</div><div style="position:absolute;left:35px;top:409px;width:962px;height:26px;box-sizing:border-box;background:#ccccee"></div><div class="t" style="left:96.80px;top:414.21px;font-size:17px;font-weight:bold;color:#000;letter-spacing:0.15px;-webkit-text-stroke:0.3px #000;">August 2014</div><div style="position:absolute;left:95px;top:435px;width:30px;height:37px;box-sizing:border-box;border:1px solid #eeeeee;background:#ffffff"></div><div class="c" style="left:95px;top:437.2px;width:30px;font-weight:normal;font-size:12.7px;">Fr<br>1</div><div style="position:absolute;left:95px;top:472px;width:30px;height:29px;box-sizing:border-box;background:#fefefe"></div><div style="position:absolute;left:125px;top:435px;width:28px;height:37px;box-sizing:border-box;background:#dddddd"></div><div class="c" style="left:125px;top:438.0px;width:28px;font-weight:bold;font-size:13px;-webkit-text-stroke:0.25px #000;">Sa<br>2</div><div style="position:absolute;left:125px;top:472px;width:28px;height:29px;box-sizing:border-box;background:#fefefe"></div><div style="position:absolute;left:153px;top:435px;width:31px;height:37px;box-sizing:border-box;background:#dddddd"></div><div class="c" style="left:153px;top:438.0px;width:31px;font-weight:bold;font-size:13px;-webkit-text-stroke:0.25px #000;">So<br>3</div><div style="position:absolute;left:153px;top:472px;width:31px;height:29px;box-sizing:border-box;background:#fefefe"></div><div style="position:absolute;left:184px;top:435px;width:28px;height:37px;box-sizing:border-box;border:1px solid #eeeeee;background:#ffffff"></div><div class="c" style="left:184px;top:437.2px;width:28px;font-weight:normal;font-size:12.7px;">Mo<br>4</div><div style="position:absolute;left:184px;top:472px;width:28px;height:29px;box-sizing:border-box;background:#fefefe"></div><div style="position:absolute;left:212px;top:435px;width:28px;height:37px;box-sizing:border-box;border:1px solid #eeeeee;background:#ffffff"></div><div class="c" style="left:212px;top:437.2px;width:28px;font-weight:normal;font-size:12.7px;">Di<br>5</div><div style="position:absolute;left:212px;top:472px;width:28px;height:29px;box-sizing:border-box;background:#fefefe"></div><div style="position:absolute;left:240px;top:435px;width:29px;height:37px;box-sizing:border-box;border:1px solid #eeeeee;background:#ffffff"></div><div class="c" style="left:240px;top:437.2px;width:29px;font-weight:normal;font-size:12.7px;">Mi<br>6</div><div style="position:absolute;left:240px;top:472px;width:29px;height:29px;box-sizing:border-box;background:#fefefe"></div><div style="position:absolute;left:269px;top:435px;width:30px;height:37px;box-sizing:border-box;border:1px solid #eeeeee;background:#ffffff"></div><div class="c" style="left:269px;top:437.2px;width:30px;font-weight:normal;font-size:12.7px;">Do<br>7</div><div style="position:absolute;left:269px;top:472px;width:30px;height:29px;box-sizing:border-box;background:#fefefe"></div><div style="position:absolute;left:299px;top:435px;width:28px;height:37px;box-sizing:border-box;border:1px solid #eeeeee;background:#ffffff"></div><div class="c" style="left:299px;top:437.2px;width:28px;font-weight:normal;font-size:12.7px;">Fr<br>8</div><div style="position:absolute;left:299px;top:472px;width:28px;height:29px;box-sizing:border-box;background:#fefefe"></div><div style="position:absolute;left:327px;top:435px;width:29px;height:37px;box-sizing:border-box;background:#dddddd"></div><div class="c" style="left:327px;top:438.0px;width:29px;font-weight:bold;font-size:13px;-webkit-text-stroke:0.25px #000;">Sa<br>9</div><div style="position:absolute;left:327px;top:472px;width:29px;height:29px;box-sizing:border-box;background:#fefefe"></div><div style="position:absolute;left:356px;top:435px;width:30px;height:37px;box-sizing:border-box;background:#dddddd"></div><div class="c" style="left:356px;top:438.0px;width:30px;font-weight:bold;font-size:13px;-webkit-text-stroke:0.25px #000;">So<br>10</div><div style="position:absolute;left:356px;top:472px;width:30px;height:29px;box-sizing:border-box;background:#fefefe"></div><div style="position:absolute;left:386px;top:435px;width:28px;height:37px;box-sizing:border-box;border:1px solid #eeeeee;background:#ffffff"></div><div class="c" style="left:386px;top:437.2px;width:28px;font-weight:normal;font-size:12.7px;">Mo<br>11</div><div style="position:absolute;left:386px;top:472px;width:28px;height:29px;box-sizing:border-box;background:#fefefe"></div><div style="position:absolute;left:414px;top:435px;width:28px;height:37px;box-sizing:border-box;border:1px solid #eeeeee;background:#ffffff"></div><div class="c" style="left:414px;top:437.2px;width:28px;font-weight:normal;font-size:12.7px;">Di<br>12</div><div style="position:absolute;left:414px;top:472px;width:28px;height:29px;box-sizing:border-box;background:#fefefe"></div><div style="position:absolute;left:442px;top:435px;width:29px;height:37px;box-sizing:border-box;border:1px solid #eeeeee;background:#ffffff"></div><div class="c" style="left:442px;top:437.2px;width:29px;font-weight:normal;font-size:12.7px;">Mi<br>13</div><div style="position:absolute;left:442px;top:472px;width:29px;height:29px;box-sizing:border-box;background:#fefefe"></div><div style="position:absolute;left:471px;top:435px;width:30px;height:37px;box-sizing:border-box;border:1px solid #eeeeee;background:#ffffff"></div><div class="c" style="left:471px;top:437.2px;width:30px;font-weight:normal;font-size:12.7px;">Do<br>14</div><div style="position:absolute;left:471px;top:472px;width:30px;height:29px;box-sizing:border-box;background:#fefefe"></div><div style="position:absolute;left:501px;top:435px;width:29px;height:37px;box-sizing:border-box;border:1px solid #eeeeee;background:#ffffff"></div><div class="c" style="left:501px;top:437.2px;width:29px;font-weight:normal;font-size:12.7px;">Fr<br>15</div><div style="position:absolute;left:501px;top:472px;width:29px;height:29px;box-sizing:border-box;background:#fefefe"></div><div style="position:absolute;left:530px;top:435px;width:28px;height:37px;box-sizing:border-box;background:#dddddd"></div><div class="c" style="left:530px;top:438.0px;width:28px;font-weight:bold;font-size:13px;-webkit-text-stroke:0.25px #000;">Sa<br>16</div><div style="position:absolute;left:530px;top:472px;width:28px;height:29px;box-sizing:border-box;background:#fefefe"></div><div style="position:absolute;left:558px;top:435px;width:30px;height:37px;box-sizing:border-box;background:#dddddd"></div><div class="c" style="left:558px;top:438.0px;width:30px;font-weight:bold;font-size:13px;-webkit-text-stroke:0.25px #000;">So<br>17</div><div style="position:absolute;left:558px;top:472px;width:30px;height:29px;box-sizing:border-box;background:#fefefe"></div><div style="position:absolute;left:588px;top:435px;width:29px;height:37px;box-sizing:border-box;border:1px solid #eeeeee;background:#ffffff"></div><div class="c" style="left:588px;top:437.2px;width:29px;font-weight:normal;font-size:12.7px;">Mo<br>18</div><div style="position:absolute;left:588px;top:472px;width:29px;height:29px;box-sizing:border-box;background:#fefefe"></div><div style="position:absolute;left:617px;top:435px;width:28px;height:37px;box-sizing:border-box;border:1px solid #eeeeee;background:#ffffff"></div><div class="c" style="left:617px;top:437.2px;width:28px;font-weight:normal;font-size:12.7px;">Di<br>19</div><div style="position:absolute;left:617px;top:472px;width:28px;height:29px;box-sizing:border-box;background:#fefefe"></div><div style="position:absolute;left:645px;top:435px;width:28px;height:37px;box-sizing:border-box;border:1px solid #eeeeee;background:#ffffff"></div><div class="c" style="left:645px;top:437.2px;width:28px;font-weight:normal;font-size:12.7px;">Mi<br>20</div><div style="position:absolute;left:645px;top:472px;width:28px;height:29px;box-sizing:border-box;background:#fefefe"></div><div style="position:absolute;left:673px;top:435px;width:31px;height:37px;box-sizing:border-box;border:1px solid #eeeeee;background:#ffffff"></div><div class="c" style="left:673px;top:437.2px;width:31px;font-weight:normal;font-size:12.7px;">Do<br>21</div><div style="position:absolute;left:673px;top:472px;width:31px;height:29px;box-sizing:border-box;background:#fefefe"></div><div style="position:absolute;left:704px;top:435px;width:28px;height:37px;box-sizing:border-box;border:1px solid #eeeeee;background:#ffffff"></div><div class="c" style="left:704px;top:437.2px;width:28px;font-weight:normal;font-size:12.7px;">Fr<br>22</div><div style="position:absolute;left:704px;top:472px;width:28px;height:29px;box-sizing:border-box;background:#fefefe"></div><div style="position:absolute;left:732px;top:435px;width:29px;height:37px;box-sizing:border-box;background:#dddddd"></div><div class="c" style="left:732px;top:438.0px;width:29px;font-weight:bold;font-size:13px;-webkit-text-stroke:0.25px #000;">Sa<br>23</div><div style="position:absolute;left:732px;top:472px;width:29px;height:29px;box-sizing:border-box;background:#fefefe"></div><div style="position:absolute;left:761px;top:435px;width:30px;height:37px;box-sizing:border-box;background:#dddddd"></div><div class="c" style="left:761px;top:438.0px;width:30px;font-weight:bold;font-size:13px;-webkit-text-stroke:0.25px #000;">So<br>24</div><div style="position:absolute;left:761px;top:472px;width:30px;height:29px;box-sizing:border-box;background:#fefefe"></div><div style="position:absolute;left:791px;top:435px;width:30px;height:37px;box-sizing:border-box;border:1px solid #eeeeee;background:#ffffff"></div><div class="c" style="left:791px;top:437.2px;width:30px;font-weight:normal;font-size:12.7px;">Mo<br>25</div><div style="position:absolute;left:791px;top:472px;width:30px;height:29px;box-sizing:border-box;background:#fefefe"></div><div style="position:absolute;left:821px;top:435px;width:29px;height:37px;box-sizing:border-box;border:1px solid #eeeeee;background:#ffffff"></div><div class="c" style="left:821px;top:437.2px;width:29px;font-weight:normal;font-size:12.7px;">Di<br>26</div><div style="position:absolute;left:821px;top:472px;width:29px;height:29px;box-sizing:border-box;background:#fefefe"></div><div style="position:absolute;left:850px;top:435px;width:29px;height:37px;box-sizing:border-box;border:1px solid #eeeeee;background:#ffffff"></div><div class="c" style="left:850px;top:437.2px;width:29px;font-weight:normal;font-size:12.7px;">Mi<br>27</div><div style="position:absolute;left:850px;top:472px;width:29px;height:29px;box-sizing:border-box;background:#fefefe"></div><div style="position:absolute;left:879px;top:435px;width:31px;height:37px;box-sizing:border-box;border:1px solid #eeeeee;background:#ffffff"></div><div class="c" style="left:879px;top:437.2px;width:31px;font-weight:normal;font-size:12.7px;">Do<br>28</div><div style="position:absolute;left:879px;top:472px;width:31px;height:29px;box-sizing:border-box;background:#fefefe"></div><div style="position:absolute;left:910px;top:435px;width:28px;height:37px;box-sizing:border-box;border:1px solid #eeeeee;background:#ffffff"></div><div class="c" style="left:910px;top:437.2px;width:28px;font-weight:normal;font-size:12.7px;">Fr<br>29</div><div style="position:absolute;left:910px;top:472px;width:28px;height:29px;box-sizing:border-box;background:#fefefe"></div><div style="position:absolute;left:938px;top:435px;width:28px;height:37px;box-sizing:border-box;background:#dddddd"></div><div class="c" style="left:938px;top:438.0px;width:28px;font-weight:bold;font-size:13px;-webkit-text-stroke:0.25px #000;">Sa<br>30</div><div style="position:absolute;left:938px;top:472px;width:28px;height:29px;box-sizing:border-box;background:#fefefe"></div><div style="position:absolute;left:966px;top:435px;width:31px;height:37px;box-sizing:border-box;background:#dddddd"></div><div class="c" style="left:966px;top:438.0px;width:31px;font-weight:bold;font-size:13px;-webkit-text-stroke:0.25px #000;">So<br>31</div><div style="position:absolute;left:966px;top:472px;width:31px;height:29px;box-sizing:border-box;background:#fefefe"></div><div class="t" style="left:41.40px;top:481.65px;font-size:12.7px;font-weight:normal;color:#000;letter-spacing:0px;">gesperrt</div><div style="position:absolute;left:35px;top:530px;width:962px;height:26px;box-sizing:border-box;background:#ccccee"></div><div class="t" style="left:96.80px;top:535.21px;font-size:17px;font-weight:bold;color:#000;letter-spacing:0.15px;-webkit-text-stroke:0.3px #000;">September 2014</div><div style="position:absolute;left:95px;top:556px;width:30px;height:36px;box-sizing:border-box;border:1px solid #eeeeee;background:#ffffff"></div><div class="c" style="left:95px;top:558.2px;width:30px;font-weight:normal;font-size:12.7px;">Mo<br>1</div><div style="position:absolute;left:95px;top:592px;width:30px;height:29px;box-sizing:border-box;background:#fefefe"></div><div style="position:absolute;left:125px;top:556px;width:28px;height:36px;box-sizing:border-box;border:1px solid #eeeeee;background:#ffffff"></div><div class="c" style="left:125px;top:558.2px;width:28px;font-weight:normal;font-size:12.7px;">Di<br>2</div><div style="position:absolute;left:125px;top:592px;width:28px;height:29px;box-sizing:border-box;background:#fefefe"></div><div style="position:absolute;left:153px;top:556px;width:31px;height:36px;box-sizing:border-box;border:1px solid #eeeeee;background:#ffffff"></div><div class="c" style="left:153px;top:558.2px;width:31px;font-weight:normal;font-size:12.7px;">Mi<br>3</div><div style="position:absolute;left:153px;top:592px;width:31px;height:29px;box-sizing:border-box;background:#fefefe"></div><div style="position:absolute;left:184px;top:556px;width:28px;height:36px;box-sizing:border-box;border:1px solid #eeeeee;background:#ffffff"></div><div class="c" style="left:184px;top:558.2px;width:28px;font-weight:normal;font-size:12.7px;">Do<br>4</div><div style="position:absolute;left:184px;top:592px;width:28px;height:29px;box-sizing:border-box;background:#fefefe"></div><div style="position:absolute;left:212px;top:556px;width:28px;height:36px;box-sizing:border-box;border:1px solid #eeeeee;background:#ffffff"></div><div class="c" style="left:212px;top:558.2px;width:28px;font-weight:normal;font-size:12.7px;">Fr<br>5</div><div style="position:absolute;left:212px;top:592px;width:28px;height:29px;box-sizing:border-box;background:#fefefe"></div><div style="position:absolute;left:240px;top:556px;width:29px;height:36px;box-sizing:border-box;background:#dddddd"></div><div class="c" style="left:240px;top:559.0px;width:29px;font-weight:bold;font-size:13px;-webkit-text-stroke:0.25px #000;">Sa<br>6</div><div style="position:absolute;left:240px;top:592px;width:29px;height:29px;box-sizing:border-box;background:#fefefe"></div><div style="position:absolute;left:269px;top:556px;width:30px;height:36px;box-sizing:border-box;background:#dddddd"></div><div class="c" style="left:269px;top:559.0px;width:30px;font-weight:bold;font-size:13px;-webkit-text-stroke:0.25px #000;">So<br>7</div><div style="position:absolute;left:269px;top:592px;width:30px;height:29px;box-sizing:border-box;background:#fefefe"></div><div style="position:absolute;left:299px;top:556px;width:28px;height:36px;box-sizing:border-box;border:1px solid #eeeeee;background:#ffffff"></div><div class="c" style="left:299px;top:558.2px;width:28px;font-weight:normal;font-size:12.7px;">Mo<br>8</div><div style="position:absolute;left:299px;top:592px;width:28px;height:29px;box-sizing:border-box;background:#fefefe"></div><div style="position:absolute;left:327px;top:556px;width:29px;height:36px;box-sizing:border-box;border:1px solid #eeeeee;background:#ffffff"></div><div class="c" style="left:327px;top:558.2px;width:29px;font-weight:normal;font-size:12.7px;">Di<br>9</div><div style="position:absolute;left:327px;top:592px;width:29px;height:29px;box-sizing:border-box;background:#fefefe"></div><div style="position:absolute;left:356px;top:556px;width:30px;height:36px;box-sizing:border-box;border:1px solid #eeeeee;background:#ffffff"></div><div class="c" style="left:356px;top:558.2px;width:30px;font-weight:normal;font-size:12.7px;">Mi<br>10</div><div style="position:absolute;left:356px;top:592px;width:30px;height:29px;box-sizing:border-box;background:#fefefe"></div><div style="position:absolute;left:386px;top:556px;width:28px;height:36px;box-sizing:border-box;border:1px solid #eeeeee;background:#ffffff"></div><div class="c" style="left:386px;top:558.2px;width:28px;font-weight:normal;font-size:12.7px;">Do<br>11</div><div style="position:absolute;left:386px;top:592px;width:28px;height:29px;box-sizing:border-box;background:#fefefe"></div><div style="position:absolute;left:414px;top:556px;width:28px;height:36px;box-sizing:border-box;border:1px solid #eeeeee;background:#ffffff"></div><div class="c" style="left:414px;top:558.2px;width:28px;font-weight:normal;font-size:12.7px;">Fr<br>12</div><div style="position:absolute;left:414px;top:592px;width:28px;height:29px;box-sizing:border-box;background:#fefefe"></div><div style="position:absolute;left:442px;top:556px;width:29px;height:36px;box-sizing:border-box;background:#dddddd"></div><div class="c" style="left:442px;top:559.0px;width:29px;font-weight:bold;font-size:13px;-webkit-text-stroke:0.25px #000;">Sa<br>13</div><div style="position:absolute;left:442px;top:592px;width:29px;height:29px;box-sizing:border-box;background:#fefefe"></div><div style="position:absolute;left:471px;top:556px;width:30px;height:36px;box-sizing:border-box;background:#dddddd"></div><div class="c" style="left:471px;top:559.0px;width:30px;font-weight:bold;font-size:13px;-webkit-text-stroke:0.25px #000;">So<br>14</div><div style="position:absolute;left:471px;top:592px;width:30px;height:29px;box-sizing:border-box;background:#fefefe"></div><div style="position:absolute;left:501px;top:556px;width:29px;height:36px;box-sizing:border-box;border:1px solid #eeeeee;background:#ffffff"></div><div class="c" style="left:501px;top:558.2px;width:29px;font-weight:normal;font-size:12.7px;">Mo<br>15</div><div style="position:absolute;left:501px;top:592px;width:29px;height:29px;box-sizing:border-box;background:#fefefe"></div><div style="position:absolute;left:530px;top:556px;width:28px;height:36px;box-sizing:border-box;border:1px solid #eeeeee;background:#ffffff"></div><div class="c" style="left:530px;top:558.2px;width:28px;font-weight:normal;font-size:12.7px;">Di<br>16</div><div style="position:absolute;left:530px;top:592px;width:28px;height:29px;box-sizing:border-box;background:#fefefe"></div><div style="position:absolute;left:558px;top:556px;width:30px;height:36px;box-sizing:border-box;border:1px solid #eeeeee;background:#ffffff"></div><div class="c" style="left:558px;top:558.2px;width:30px;font-weight:normal;font-size:12.7px;">Mi<br>17</div><div style="position:absolute;left:558px;top:592px;width:30px;height:29px;box-sizing:border-box;background:#fefefe"></div><div style="position:absolute;left:588px;top:556px;width:29px;height:36px;box-sizing:border-box;border:1px solid #eeeeee;background:#ffffff"></div><div class="c" style="left:588px;top:558.2px;width:29px;font-weight:normal;font-size:12.7px;">Do<br>18</div><div style="position:absolute;left:588px;top:592px;width:29px;height:29px;box-sizing:border-box;background:#fefefe"></div><div style="position:absolute;left:617px;top:556px;width:28px;height:36px;box-sizing:border-box;border:1px solid #eeeeee;background:#ffffff"></div><div class="c" style="left:617px;top:558.2px;width:28px;font-weight:normal;font-size:12.7px;">Fr<br>19</div><div style="position:absolute;left:617px;top:592px;width:28px;height:29px;box-sizing:border-box;background:#fefefe"></div><div style="position:absolute;left:645px;top:556px;width:28px;height:36px;box-sizing:border-box;background:#dddddd"></div><div class="c" style="left:645px;top:559.0px;width:28px;font-weight:bold;font-size:13px;-webkit-text-stroke:0.25px #000;">Sa<br>20</div><div style="position:absolute;left:645px;top:592px;width:28px;height:29px;box-sizing:border-box;background:#fefefe"></div><div style="position:absolute;left:673px;top:556px;width:31px;height:36px;box-sizing:border-box;background:#dddddd"></div><div class="c" style="left:673px;top:559.0px;width:31px;font-weight:bold;font-size:13px;-webkit-text-stroke:0.25px #000;">So<br>21</div><div style="position:absolute;left:673px;top:592px;width:31px;height:29px;box-sizing:border-box;background:#fefefe"></div><div style="position:absolute;left:704px;top:556px;width:28px;height:36px;box-sizing:border-box;border:1px solid #eeeeee;background:#ffffff"></div><div class="c" style="left:704px;top:558.2px;width:28px;font-weight:normal;font-size:12.7px;">Mo<br>22</div><div style="position:absolute;left:704px;top:592px;width:28px;height:29px;box-sizing:border-box;background:#fefefe"></div><div style="position:absolute;left:732px;top:556px;width:29px;height:36px;box-sizing:border-box;border:1px solid #eeeeee;background:#ffffff"></div><div class="c" style="left:732px;top:558.2px;width:29px;font-weight:normal;font-size:12.7px;">Di<br>23</div><div style="position:absolute;left:732px;top:592px;width:29px;height:29px;box-sizing:border-box;background:#fefefe"></div><div style="position:absolute;left:761px;top:556px;width:30px;height:36px;box-sizing:border-box;border:1px solid #eeeeee;background:#ffffff"></div><div class="c" style="left:761px;top:558.2px;width:30px;font-weight:normal;font-size:12.7px;">Mi<br>24</div><div style="position:absolute;left:761px;top:592px;width:30px;height:29px;box-sizing:border-box;background:#fefefe"></div><div style="position:absolute;left:791px;top:556px;width:30px;height:36px;box-sizing:border-box;border:1px solid #eeeeee;background:#ffffff"></div><div class="c" style="left:791px;top:558.2px;width:30px;font-weight:normal;font-size:12.7px;">Do<br>25</div><div style="position:absolute;left:791px;top:592px;width:30px;height:29px;box-sizing:border-box;background:#fefefe"></div><div style="position:absolute;left:821px;top:556px;width:29px;height:36px;box-sizing:border-box;border:1px solid #eeeeee;background:#ffffff"></div><div class="c" style="left:821px;top:558.2px;width:29px;font-weight:normal;font-size:12.7px;">Fr<br>26</div><div style="position:absolute;left:821px;top:592px;width:29px;height:29px;box-sizing:border-box;background:#fefefe"></div><div style="position:absolute;left:850px;top:556px;width:29px;height:36px;box-sizing:border-box;background:#dddddd"></div><div class="c" style="left:850px;top:559.0px;width:29px;font-weight:bold;font-size:13px;-webkit-text-stroke:0.25px #000;">Sa<br>27</div><div style="position:absolute;left:850px;top:592px;width:29px;height:29px;box-sizing:border-box;background:#fefefe"></div><div style="position:absolute;left:879px;top:556px;width:31px;height:36px;box-sizing:border-box;background:#dddddd"></div><div class="c" style="left:879px;top:559.0px;width:31px;font-weight:bold;font-size:13px;-webkit-text-stroke:0.25px #000;">So<br>28</div><div style="position:absolute;left:879px;top:592px;width:31px;height:29px;box-sizing:border-box;background:#fefefe"></div><div style="position:absolute;left:910px;top:556px;width:28px;height:36px;box-sizing:border-box;border:1px solid #eeeeee;background:#ffffff"></div><div class="c" style="left:910px;top:558.2px;width:28px;font-weight:normal;font-size:12.7px;">Mo<br>29</div><div style="position:absolute;left:910px;top:592px;width:28px;height:29px;box-sizing:border-box;background:#fefefe"></div><div style="position:absolute;left:938px;top:556px;width:28px;height:36px;box-sizing:border-box;border:1px solid #eeeeee;background:#ffffff"></div><div class="c" style="left:938px;top:558.2px;width:28px;font-weight:normal;font-size:12.7px;">Di<br>30</div><div style="position:absolute;left:938px;top:592px;width:28px;height:29px;box-sizing:border-box;background:#fefefe"></div><div class="t" style="left:41.40px;top:601.65px;font-size:12.7px;font-weight:normal;color:#000;letter-spacing:0px;">gesperrt</div><div style="position:absolute;left:997px;top:289px;width:17px;height:360px;box-sizing:border-box;background:#f0f0f0;border-left:1px solid #e8e8e8"></div><svg style="position:absolute;left:1002px;top:295px" width="9" height="6"><path d="M0.5,4.5 H8 L4.25,0.5 Z" fill="#404040"/></svg><svg style="position:absolute;left:1002px;top:638px" width="9" height="6"><path d="M0.5,0.5 H8 L4.25,4.5 Z" fill="#404040"/></svg><div style="position:absolute;left:998px;top:307px;width:15px;height:148px;box-sizing:border-box;border:1px solid #979797;border-radius:2px;background:linear-gradient(to right,#f4f4f4 0%,#e9e9e9 45%,#d8d8d8 55%,#cfcfcf 100%)"></div><svg style="position:absolute;left:1001px;top:376px" width="9" height="9"><path d="M1,1.5 H8 M1,4.5 H8 M1,7.5 H8" stroke="#6a6a6a" stroke-width="1"/></svg>
</body></html>
